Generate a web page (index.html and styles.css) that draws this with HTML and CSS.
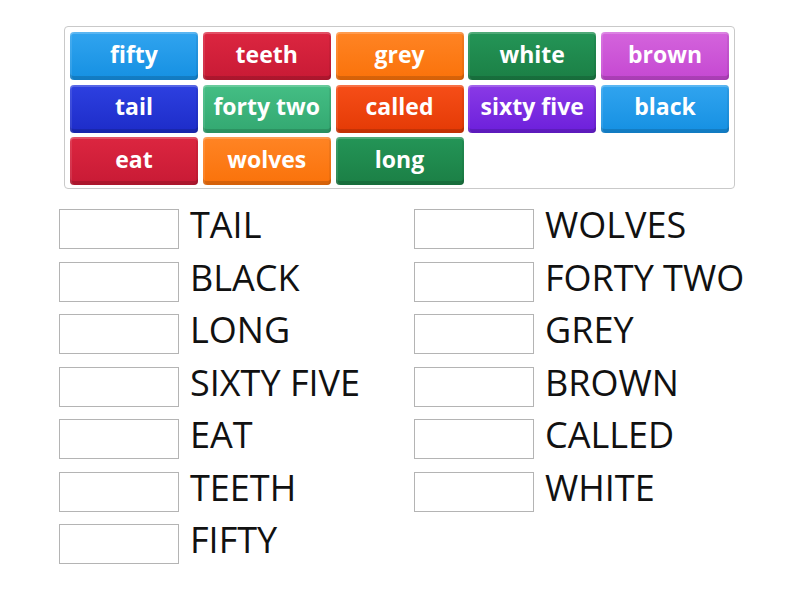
FILE: index.html
```html
<!DOCTYPE html>
<html>
<head>
<meta charset="utf-8">
<link rel="stylesheet" href="styles.css">
</head>
<body>
<div class="tray">
  <div class="tile c-blue">fifty</div>
  <div class="tile c-red">teeth</div>
  <div class="tile c-orange">grey</div>
  <div class="tile c-green">white</div>
  <div class="tile c-magenta">brown</div>
  <div class="tile c-navy">tail</div>
  <div class="tile c-teal">forty two</div>
  <div class="tile c-vermilion">called</div>
  <div class="tile c-purple">sixty five</div>
  <div class="tile c-blue">black</div>
  <div class="tile c-red">eat</div>
  <div class="tile c-orange">wolves</div>
  <div class="tile c-green">long</div>
</div>
<div class="targets">
  <div class="col">
    <div class="row"><div class="slot"></div><span class="label">TAIL</span></div>
    <div class="row"><div class="slot"></div><span class="label">BLACK</span></div>
    <div class="row"><div class="slot"></div><span class="label">LONG</span></div>
    <div class="row"><div class="slot"></div><span class="label">SIXTY FIVE</span></div>
    <div class="row"><div class="slot"></div><span class="label">EAT</span></div>
    <div class="row"><div class="slot"></div><span class="label">TEETH</span></div>
    <div class="row"><div class="slot"></div><span class="label">FIFTY</span></div>
  </div>
  <div class="col">
    <div class="row"><div class="slot"></div><span class="label">WOLVES</span></div>
    <div class="row"><div class="slot"></div><span class="label">FORTY TWO</span></div>
    <div class="row"><div class="slot"></div><span class="label">GREY</span></div>
    <div class="row"><div class="slot"></div><span class="label">BROWN</span></div>
    <div class="row"><div class="slot"></div><span class="label">CALLED</span></div>
    <div class="row"><div class="slot"></div><span class="label">WHITE</span></div>
  </div>
</div>
</body>
</html>
```
FILE: styles.css
```css
html, body {
  margin: 0;
  padding: 0;
  background: #ffffff;
  font-family: "Open Sans", "Liberation Sans", sans-serif;
}

.tray {
  box-sizing: border-box;
  margin: 26px 0 0 64px;
  width: 671px;
  padding: 5px 5px 3px 5px;
  border: 1px solid #c9c9c9;
  border-radius: 4px;
  display: grid;
  grid-template-columns: repeat(5, 128px);
  grid-auto-rows: 48px;
  column-gap: 4.75px;
  row-gap: 4.5px;
}

.tile {
  border-radius: 4px;
  color: #ffffff;
  font-weight: 700;
  font-size: 23px;
  display: flex;
  align-items: center;
  justify-content: center;
  padding-bottom: 5px;
  box-sizing: border-box;
  box-shadow: inset 0 2px 0 rgba(255,255,255,0.2), inset 2px 0 0 rgba(255,255,255,0.1), inset -2px 0 0 rgba(0,0,0,0.06), inset 0 -4px 0 rgba(0,0,0,0.14);
}

.c-blue { background: linear-gradient(#31a4ef, #1590e2); }
.c-red { background: linear-gradient(#dc2640, #c81a35); }
.c-orange { background: linear-gradient(#ff8424, #fa720a); }
.c-green { background: linear-gradient(#249557, #1b7f45); }
.c-magenta { background: linear-gradient(#d464dc, #c548d2); }
.c-navy { background: linear-gradient(#2d40e0, #1d2cc8); }
.c-teal { background: linear-gradient(#44be84, #33a871); }
.c-vermilion { background: linear-gradient(#f64e18, #e43a05); }
.c-purple { background: linear-gradient(#8a3ae6, #6c1fdb); }

.targets {
  margin: 20px 0 0 59px;
  display: flex;
}

.col {
  width: 355px;
  display: flex;
  flex-direction: column;
  gap: 12.5px;
}

.row {
  display: flex;
  align-items: center;
  height: 40px;
}

.slot {
  box-sizing: border-box;
  width: 120px;
  height: 40px;
  border: 1px solid #b4b4b4;
  background: #ffffff;
  flex: none;
}

.label {
  margin-left: 11px;
  font-size: 36px;
  color: #111111;
  white-space: nowrap;
  padding-bottom: 9px;
}
```
